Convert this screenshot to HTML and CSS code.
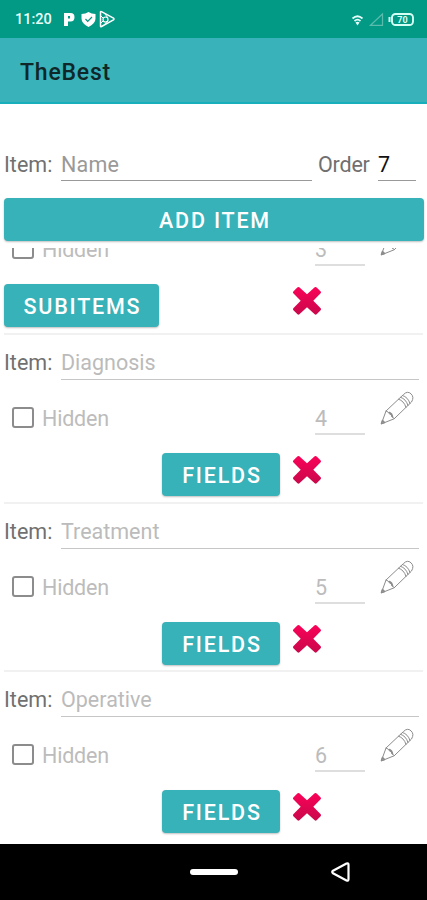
FILE: index.html
```
<!DOCTYPE html>
<html lang="en">
<head>
<meta charset="utf-8">
<title>TheBest</title>
<link rel="stylesheet" href="styles.css">
</head>
<body>
<svg class="defs" width="0" height="0">
  <defs>
    <linearGradient id="red" x1="0" y1="0" x2="0" y2="1"><stop offset="0" stop-color="#fa0258"/><stop offset="1" stop-color="#c9084b"/></linearGradient>
    <symbol id="cross" viewBox="0 0 30 30"><path fill="url(#red)" d="M7.300 1.200 15 8.300l7.700-7.100q1-.7 2 .2l4 4q.7 1-.1 1.900L21.300 14.700l7.400 7.600q.8 1-.1 2l-4 4q-1 .7-1.900-.1L15 21.300l-7.600 6.900q-1 .8-1.900.1L1.400 24.300q-.8-1-.1-2l7.400-7.600-7.400-7.400q-.8-1 0-1.900l4-4q1-.8 2-.2z"/></symbol>
    <symbol id="pencil" viewBox="0 0 34 34"><g fill="none" stroke="#8c8c8c" stroke-width="1" stroke-linejoin="round" stroke-linecap="round"><path d="M1.500 32.500 6 20 23.500 3.500q4-4 7.500-.7t.5 8.200L14.500 27.500z"/><path d="M6 20q2.500.5 3 2.500 3 1 3 3.500l2.500 1.500"/><path d="M18.500 8.200q5.500 1.500 7.500 8.200M20.500 6.300q5.500 1.500 7.500 8.200M22.500 4.500q5.500 1.500 7.500 8"/><path stroke-width="1.600" d="m1.500 32.500 1-3 2 2zM9.500 21.500q2.500 1.200 3 4"/></g></symbol>
  </defs>
</svg>
<div class="screen">
  <header class="status">
    <span class="time">11:20</span>
    <svg class="left-icons" width="54" height="18" viewBox="0 0 54 18">
      <path fill="#fff" fill-rule="evenodd" d="M2 3h6.500q4 0 4 4.200t-4 4.300H6V16H2zM6 6v2.500h2V6z"/>
      <path fill="#fff" d="M26.500 2q3 2 7 2v4.500q0 5-7 8.500Q19.500 13.500 19.500 8.500V4q4 0 7-2z"/>
      <path fill="none" stroke="#079382" stroke-width="1.200" d="m23.500 9 2.200 2.300L30 7"/>
      <g fill="none" stroke="#fff" stroke-width="1.500" stroke-linejoin="round"><path d="M38.500 2.500q-.2-1.300 1-.8l12 6.500q1 .8 0 1.600l-12 6.700q-1.200.5-1-.8z"/><path d="m39 6 2.500 2.500M39 13l2.500-2.500M46 8l-3-4M46 10l-3 4" stroke-width="1"/><circle cx="43.500" cy="9.500" r="2.500" stroke-width="1.200"/></g>
    </svg>
    <svg class="right-icons" width="64" height="18" viewBox="0 0 64 18">
      <path fill="none" stroke="#e5fffb" stroke-width="1.700" d="M1.500 8.500q5-4.500 10 0M3.500 11q3-2.600 6 0"/><path fill="#e5fffb" d="m4.500 12.500 2 3 2-3q-2-1.600-4 0z"/>
      <path fill="none" stroke="#59bcad" stroke-width="1.200" d="M19.500 15.300 31.500 4v11.300z"/>
      <rect x="41" y="4" width="21" height="11" rx="3.500" fill="none" stroke="#d4fff4" stroke-width="1.900"/><path d="M37.500 7h2v5h-2z" fill="#d4fff4"/>
      <text x="51.500" y="13" class="battery">70</text>
    </svg>
  </header>
  <div class="appbar"><h1>TheBest</h1></div>
  <section class="form">
    <div class="form-row">
      <span class="label">Item:</span><span class="input name">Name</span>
      <span class="label order-label">Order</span><span class="input order">7</span>
    </div>
    <button class="btn">ADD ITEM</button>
  </section>
  <main class="list">
    <article class="item">
      <div class="title-row"></div>
      <div class="meta-row"><span class="check"></span><span class="hidden-label">Hidden</span><span class="number">3</span><svg class="pencil"><use href="#pencil"/></svg></div>
      <div class="action-row"><button class="btn sub">SUBITEMS</button><svg class="cross"><use href="#cross"/></svg></div>
    </article>
    <article class="item">
      <div class="title-row"><span class="label">Item:</span><span class="field">Diagnosis</span></div>
      <div class="meta-row"><span class="check"></span><span class="hidden-label">Hidden</span><span class="number">4</span><svg class="pencil"><use href="#pencil"/></svg></div>
      <div class="action-row"><button class="btn fields">FIELDS</button><svg class="cross"><use href="#cross"/></svg></div>
    </article>
    <article class="item">
      <div class="title-row"><span class="label">Item:</span><span class="field">Treatment</span></div>
      <div class="meta-row"><span class="check"></span><span class="hidden-label">Hidden</span><span class="number">5</span><svg class="pencil"><use href="#pencil"/></svg></div>
      <div class="action-row"><button class="btn fields">FIELDS</button><svg class="cross"><use href="#cross"/></svg></div>
    </article>
    <article class="item">
      <div class="title-row"><span class="label">Item:</span><span class="field">Operative</span></div>
      <div class="meta-row"><span class="check"></span><span class="hidden-label">Hidden</span><span class="number">6</span><svg class="pencil"><use href="#pencil"/></svg></div>
      <div class="action-row"><button class="btn fields">FIELDS</button><svg class="cross"><use href="#cross"/></svg></div>
    </article>
  </main>
  <nav class="navbar">
    <span class="home"></span>
    <svg class="back" width="22" height="24" viewBox="0 0 22 24"><path d="M16.500 3.500q2-.8 2 1.200v14.600q0 2-2 1.200L3 13.300q-1.600-1.300 0-2.600z" fill="none" stroke="#fff" stroke-width="2.200" stroke-linejoin="round"/></svg>
  </nav>
</div>
</body>
</html>
```
FILE: styles.css
```
* { box-sizing: border-box; }
body { margin: 0; font-family: Roboto, sans-serif; background: #fff; }
.defs { display: block; position: absolute; }
.screen { width: 427px; height: 900px; display: flex; flex-direction: column; overflow: hidden; }
.status { height: 38px; flex: none; background: #029985; display: flex; align-items: center; padding: 0 12px 0 15px; }
.time { color: #e8fffa; font-size: 14.5px; font-weight: 500; width: 47px; letter-spacing: 0; line-height: 18px; padding-top: 2px; }
.right-icons { margin-left: auto; }
.battery { font-size: 9px; font-weight: 700; fill: #d4fff4; text-anchor: middle; }
.appbar { height: 66px; flex: none; background: #39b2b9; border-bottom: 2px solid #18afbb; display: flex; align-items: center; padding: 4px 20px 0; }
h1 { margin: 0; font-size: 23px; font-weight: 500; color: #10272a; letter-spacing: .8px; }
.form { height: 144px; flex: none; padding: 44px 3px 0 4px; }
.form-row { display: flex; height: 33px; margin-bottom: 17px; line-height: 33px; font-size: 21.5px; }
.label { width: 57px; flex: none; color: #707070; font-size: 21.5px; letter-spacing: 0; }
.input { height: 33px; border-bottom: 1px solid #999; color: #999; letter-spacing: .2px; }
.name { width: 251px; margin-right: 6px; }
.order-label { width: 60px; letter-spacing: -.2px; }
.order { width: 38px; color: #111; }
.btn { display: block; width: 100%; height: 43px; padding: 2px 0 0 2px; border: 0; border-radius: 4px; background: #37b2b8; color: #fff; font: 500 21.5px/41px Roboto, sans-serif; letter-spacing: 1.8px; box-shadow: 0 1px 2px rgba(0,0,0,.25); text-align: center; white-space: nowrap; }
.list { height: 596px; flex: none; overflow: hidden; }
.item { height: 168.7px; margin: 0 4px; border-bottom: 2px solid #f1f1f1; }
.item:first-child { margin-top: -81.7px; }
.item:last-child { border-bottom-color: transparent; }
.title-row { display: flex; height: 45px; padding-top: 12px; line-height: 32px; }
.field { width: 358px; border-bottom: 1px solid #c6c6c6; color: #bbb; font-size: 21.5px; letter-spacing: 0; }
.meta-row { display: flex; height: 55px; padding-left: 8px; font-size: 21.5px; color: #bcbcbc; }
.check { width: 22px; height: 21px; flex: none; margin-top: 27px; border: 2px solid #8c8c8c; border-radius: 3px; }
.hidden-label { width: 281px; flex: none; padding: 22px 0 0 8px; line-height: 33px; letter-spacing: -.2px; }
.number { width: 50px; flex: none; margin-right: 15px; padding-top: 22px; line-height: 33px; border-bottom: 2px solid #dedede; }
.pencil { width: 34px; height: 34px; flex: none; margin-top: 11px; }
.action-row { display: flex; padding-top: 18px; }
.sub { width: 155px; margin-right: 133px; }
.fields { width: 118px; margin: 0 12px 0 158px; }
.cross { width: 30px; height: 30px; margin-top: 2px; }
.navbar { height: 56px; flex: none; background: #000; display: flex; align-items: center; padding-left: 190px; }
.home { width: 48px; height: 6px; border-radius: 3px; background: #fff; }
.back { margin-left: 92px; }
```
